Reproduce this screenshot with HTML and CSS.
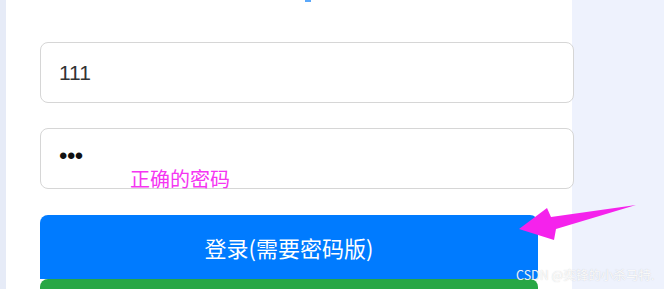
FILE: index.html
```html
<!DOCTYPE html>
<html lang="zh">
<head>
<meta charset="utf-8">
<link rel="stylesheet" href="styles.css">
</head>
<body>
<div class="page">
  <div class="strip"></div>
  <div class="panel">
    <div class="topline"><span class="topfrag"></span></div>
    <div class="field first"><span class="val">111</span></div>
    <div class="field second"><span class="dots">•••</span></div>
    <button class="btn login">登录(需要密码版)</button>
    <div class="btn green"></div>
  </div>
  <div class="side"></div>
</div>
<div class="note">正确的密码</div>
<svg class="arrow" width="664" height="289" viewBox="0 0 664 289">
  <polygon points="519,229 547,208 551,217 636,205 556,229 554,240" fill="#f522ec"/>
</svg>
<div class="mark">CSDN @奕锋的小杀马特.</div>
</body>
</html>
```
FILE: styles.css
```css
html, body { margin: 0; padding: 0; }
body {
  width: 664px; height: 289px; overflow: hidden;
  font-family: "Liberation Sans", "Noto Sans CJK SC", sans-serif;
  background: #eef2fd;
  position: relative;
}
.page { display: flex; height: 289px; }
.strip { width: 6px; background: #e6ebf7; flex: none; }
.panel {
  width: 566px; flex: none; background: #fff;
  padding-left: 34px; box-sizing: border-box;
  display: flex; flex-direction: column; align-items: flex-start;
  position: relative; z-index: 1;
}
.side { flex: 1; background: #eef2fd; }
.topline { height: 2px; width: 100%; }
.topfrag { display: block; width: 6px; height: 2px; margin-left: 265px; background: #5aa8fb; }
.field {
  width: 534px; box-sizing: border-box; border: 1.5px solid #d6d6d6; border-radius: 8px;
  background: #fff; padding-left: 18px; display: flex; align-items: center;
  color: #333; font-size: 21px;
}
.field.first { margin-top: 40px; height: 62px; }
.field.second { margin-top: 25px; height: 61px; align-items: flex-start; padding-top: 13px; }
.dots { font-size: 24px; color: #111; letter-spacing: -0.5px; font-family: "Liberation Sans", sans-serif; }
.btn {
  width: 498px; border: none; border-radius: 8px 8px 0 0; flex: none;
}
.login {
  margin-top: 26px; height: 64px; background: #007bff; color: #fff;
  font-family: "Noto Sans CJK SC", sans-serif; font-size: 22px; padding: 0;
}
.green { height: 10px; background: #28a745; }
.note {
  position: absolute; left: 130px; top: 165px; z-index: 2;
  color: #f535f2; font-size: 20px; font-family: "Noto Sans CJK SC", sans-serif; line-height: 28px;
}
.arrow { position: absolute; left: 0; top: 0; z-index: 3; }
.mark {
  position: absolute; left: 516px; top: 265px; z-index: 3;
  color: rgba(255,255,255,0.9); font-size: 12.5px; font-family: "Noto Sans CJK SC", sans-serif;
  text-shadow: 0 0 1px rgba(140,140,140,0.45);
}
```
